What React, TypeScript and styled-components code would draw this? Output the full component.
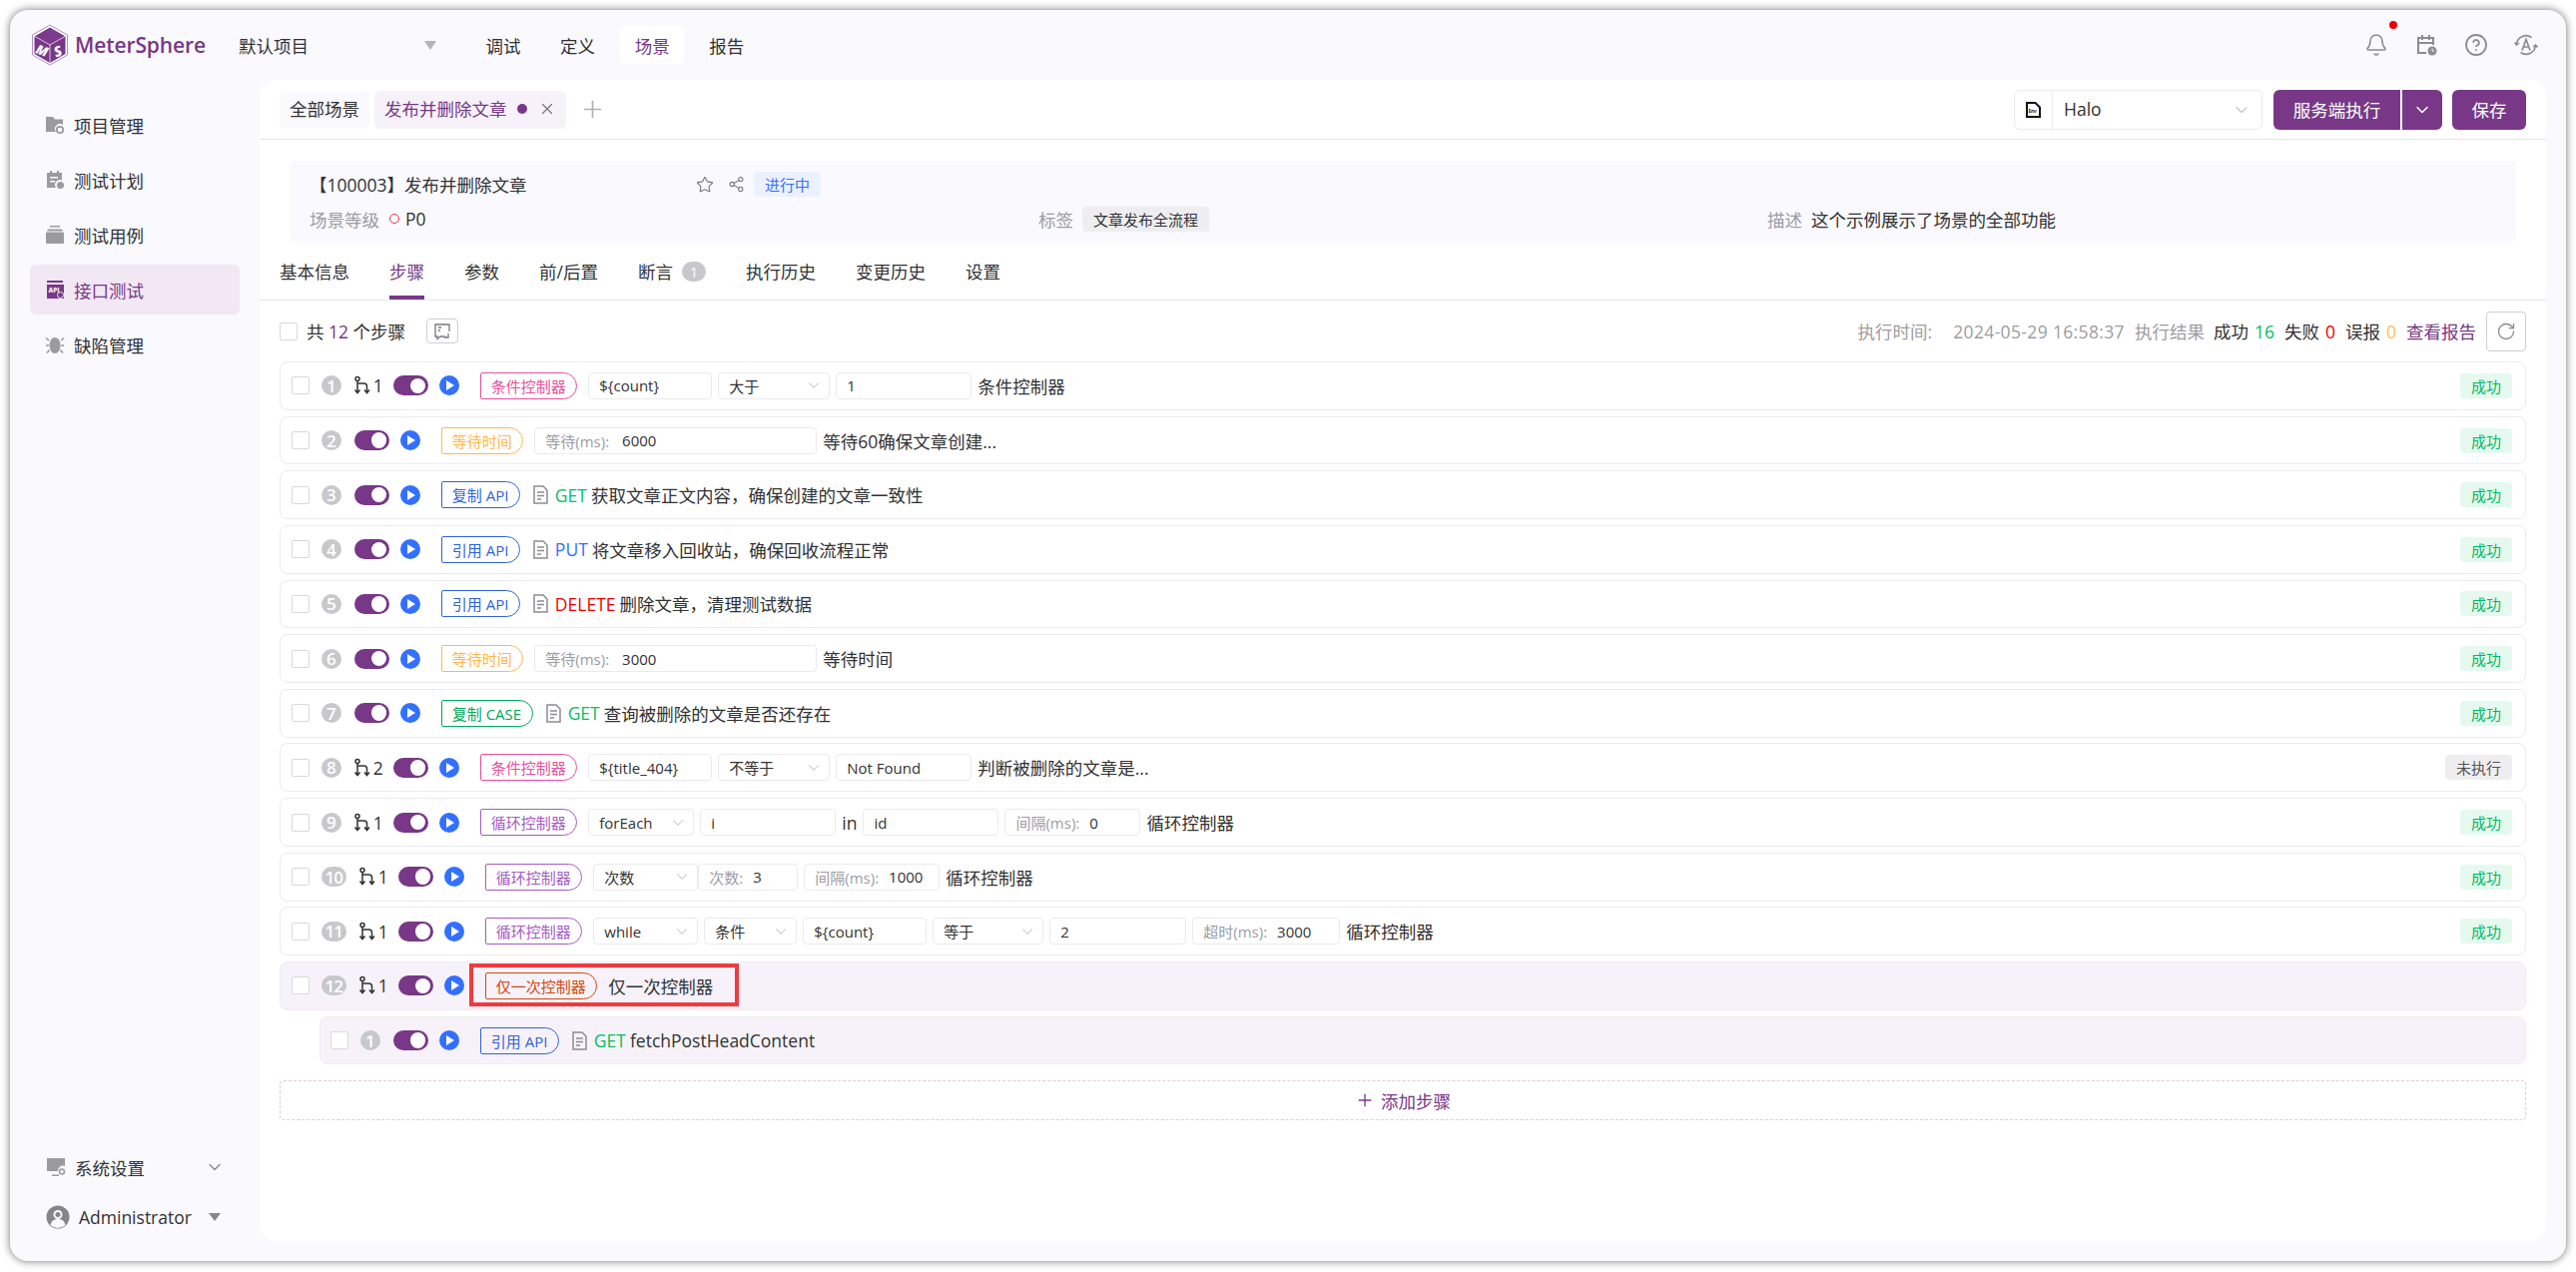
import { ReactNode } from 'react';
import styled, { createGlobalStyle } from 'styled-components';
import { Bell, ChevronDown, CircleHelp, Plus, RotateCw, Share2, Star, X } from 'lucide-react';

const COLORS = {
  primary: '#783887',
  primaryLight: '#f7f2f9',
  text: '#323233',
  muted: '#9c9ca3',
  icon: '#9a9a9f',
  border: '#ebebef',
  panel: '#f9f9fe',
  blue: '#3370ff',
  green: '#00c261',
  red: '#f00000',
  orange: '#ffc14e',
};

const TAG_TONES = {
  pink: '#e94ea0',
  amber: '#ffb84a',
  blue: '#2f62dc',
  green: '#00a85a',
  purple: '#a55bc5',
  rust: '#d4470f',
};

type Tone = keyof typeof TAG_TONES;
type Method = 'GET' | 'PUT' | 'DELETE';

type FieldSpec =
  | { kind: 'input'; w: number; text: string; attached?: boolean }
  | { kind: 'select'; w: number; text: string }
  | { kind: 'labeled'; w: number; label: string; text: string; attached?: boolean; gap?: number }
  | { kind: 'word'; text: string };

type StepData = {
  index: number;
  branch?: number;
  tag: string;
  tone: Tone;
  fields?: FieldSpec[];
  method?: Method;
  desc: string;
  status?: 'success' | 'pending';
  highlight?: boolean;
  active?: boolean;
};

const STEPS: StepData[] = [
  {
    index: 1, branch: 1, tag: '条件控制器', tone: 'pink', desc: '条件控制器', status: 'success',
    fields: [
      { kind: 'input', w: 124, text: '${count}' },
      { kind: 'select', w: 112, text: '大于' },
      { kind: 'input', w: 136, text: '1' },
    ],
  },
  {
    index: 2, tag: '等待时间', tone: 'amber', desc: '等待60确保文章创建...', status: 'success',
    fields: [{ kind: 'labeled', w: 283, label: '等待(ms):', text: '6000', gap: 13 }],
  },
  { index: 3, tag: '复制 API', tone: 'blue', method: 'GET', desc: '获取文章正文内容，确保创建的文章一致性', status: 'success' },
  { index: 4, tag: '引用 API', tone: 'blue', method: 'PUT', desc: '将文章移入回收站，确保回收流程正常', status: 'success' },
  { index: 5, tag: '引用 API', tone: 'blue', method: 'DELETE', desc: '删除文章，清理测试数据', status: 'success' },
  {
    index: 6, tag: '等待时间', tone: 'amber', desc: '等待时间', status: 'success',
    fields: [{ kind: 'labeled', w: 283, label: '等待(ms):', text: '3000', gap: 13 }],
  },
  { index: 7, tag: '复制 CASE', tone: 'green', method: 'GET', desc: '查询被删除的文章是否还存在', status: 'success' },
  {
    index: 8, branch: 2, tag: '条件控制器', tone: 'pink', desc: '判断被删除的文章是...', status: 'pending',
    fields: [
      { kind: 'input', w: 124, text: '${title_404}' },
      { kind: 'select', w: 112, text: '不等于' },
      { kind: 'input', w: 136, text: 'Not Found' },
    ],
  },
  {
    index: 9, branch: 1, tag: '循环控制器', tone: 'purple', desc: '循环控制器', status: 'success',
    fields: [
      { kind: 'select', w: 106, text: 'forEach' },
      { kind: 'input', w: 136, text: 'i' },
      { kind: 'word', text: 'in' },
      { kind: 'input', w: 136, text: 'id' },
      { kind: 'labeled', w: 136, label: '间隔(ms):', text: '0' },
    ],
  },
  {
    index: 10, branch: 1, tag: '循环控制器', tone: 'purple', desc: '循环控制器', status: 'success',
    fields: [
      { kind: 'select', w: 105, text: '次数' },
      { kind: 'labeled', w: 100, label: '次数:', text: '3', attached: true },
      { kind: 'labeled', w: 136, label: '间隔(ms):', text: '1000' },
    ],
  },
  {
    index: 11, branch: 1, tag: '循环控制器', tone: 'purple', desc: '循环控制器', status: 'success',
    fields: [
      { kind: 'select', w: 105, text: 'while' },
      { kind: 'select', w: 93, text: '条件' },
      { kind: 'input', w: 124, text: '${count}' },
      { kind: 'select', w: 111, text: '等于' },
      { kind: 'input', w: 137, text: '2' },
      { kind: 'labeled', w: 148, label: '超时(ms):', text: '3000' },
    ],
  },
  { index: 12, branch: 1, tag: '仅一次控制器', tone: 'rust', desc: '仅一次控制器', highlight: true, active: true },
];

const CHILD_STEP: StepData = { index: 1, tag: '引用 API', tone: 'blue', method: 'GET', desc: 'fetchPostHeadContent', active: true };

const GlobalStyle = createGlobalStyle`
  html, body {
    margin: 0;
    background: #fff;
  }
  body {
    font-family: "Open Sans", "Noto Sans CJK SC", sans-serif;
    font-size: 17.5px;
    color: ${COLORS.text};
  }
  * {
    box-sizing: border-box;
  }
`;

const Screen = styled.div`
  width: 2580px;
  height: 1274px;
  padding: 10px 10px 11px;
  overflow: hidden;
`;

const Window = styled.div`
  height: 100%;
  display: flex;
  flex-direction: column;
  background: ${COLORS.panel};
  border-radius: 18px;
  box-shadow: 0 0 9px rgba(0, 0, 0, 0.55);
`;

const Header = styled.header`
  height: 70px;
  flex: none;
  display: flex;
  align-items: center;
  padding: 0 28px 0 21px;
`;

const Brand = styled.div`
  display: flex;
  align-items: center;
  gap: 6px;
  width: 208px;
`;

const BrandName = styled.span`
  font-size: 21px;
  font-weight: 600;
  color: ${COLORS.primary};
  letter-spacing: -0.1px;
`;

const ProjectPicker = styled.div`
  width: 233px;
  display: flex;
  align-items: center;
  justify-content: space-between;
  padding-right: 35px;
`;

const Caret = styled.span`
  width: 0;
  height: 0;
  border-left: 6px solid transparent;
  border-right: 6px solid transparent;
  border-top: 9px solid #b4b4ba;
`;

const TopMenu = styled.nav`
  display: flex;
  gap: 10.6px;
`;

const TopMenuItem = styled.div<{ $active?: boolean }>`
  height: 38px;
  padding: 0 14.5px;
  display: flex;
  align-items: center;
  border-radius: 6px;
  background: ${p => (p.$active ? '#fff' : 'transparent')};
  color: ${p => (p.$active ? COLORS.primary : COLORS.text)};
`;

const HeaderIcons = styled.div`
  margin-left: auto;
  display: flex;
  gap: 26px;
  color: #8c8c92;
`;

const IconSlot = styled.div`
  position: relative;
  width: 24px;
  height: 24px;
`;

const RedDot = styled.span`
  position: absolute;
  top: -12px;
  right: -9px;
  width: 8px;
  height: 8px;
  border-radius: 50%;
  background: ${COLORS.red};
`;

const Body = styled.div`
  flex: 1;
  min-height: 0;
  display: flex;
`;

const Sidebar = styled.aside`
  width: 250px;
  flex: none;
  display: flex;
  flex-direction: column;
  gap: 5px;
  padding: 20px 20px 0;
`;

const SideItem = styled.div<{ $active?: boolean }>`
  height: 50px;
  display: flex;
  align-items: center;
  gap: 9px;
  padding-left: 15px;
  border-radius: 6px;
  background: ${p => (p.$active ? '#f1e8f4' : 'transparent')};
  color: ${p => (p.$active ? COLORS.primary : COLORS.text)};
`;

const SideFooter = styled.div`
  margin-top: auto;
  padding: 0 0 24px 16px;
  display: flex;
  flex-direction: column;
  gap: 10px;
`;

const FooterRow = styled.div`
  height: 40px;
  display: flex;
  align-items: center;
  gap: 9px;
  padding-right: 15px;
`;

const FooterEnd = styled.span`
  width: 20px;
  margin-left: auto;
  display: flex;
  justify-content: center;
  color: #85858b;
`;

const UserCaret = styled.span`
  width: 0;
  height: 0;
  border-left: 6px solid transparent;
  border-right: 6px solid transparent;
  border-top: 8px solid #85858b;
`;

const Main = styled.main`
  flex: 1;
  min-width: 0;
  margin: 0 20px 20px 0;
  background: #fff;
  border-radius: 16px;
`;

const TabBar = styled.div`
  height: 60px;
  display: flex;
  align-items: center;
  padding: 0 20px;
  border-bottom: 1.25px solid #e6e6ec;
`;

const SceneTab = styled.div<{ $active?: boolean }>`
  height: 38px;
  display: flex;
  align-items: center;
  padding: 0 10px 2px;
  margin-right: 5px;
  border-radius: 6px;
  background: ${p => (p.$active ? COLORS.primaryLight : COLORS.panel)};
  color: ${p => (p.$active ? COLORS.primary : COLORS.text)};
`;

const UnsavedDot = styled.span`
  width: 10px;
  height: 10px;
  margin: 0 11px 0 10px;
  border-radius: 50%;
  background: ${COLORS.primary};
`;

const AddTab = styled.span`
  display: flex;
  margin-left: 8px;
  color: #b0b0b6;
`;

const EnvPicker = styled.div`
  margin-left: auto;
  width: 249px;
  height: 40px;
  display: flex;
  align-items: center;
  border: 1.25px solid ${COLORS.border};
  border-radius: 6px;
`;

const EnvIcon = styled.span`
  width: 38px;
  height: 100%;
  display: flex;
  align-items: center;
  justify-content: center;
  border-right: 1.25px solid ${COLORS.border};
`;

const EnvName = styled.span`
  flex: 1;
  padding: 0 0 2px 11px;
`;

const EnvChevron = styled.span`
  display: flex;
  padding-right: 10px;
  color: #c4c4ca;
`;

const PrimaryButton = styled.button<{ $side?: 'left' | 'right'; $w: number }>`
  width: ${p => p.$w}px;
  height: 40px;
  display: flex;
  align-items: center;
  justify-content: center;
  padding: 0;
  border: 0;
  font: inherit;
  color: #fff;
  background: ${COLORS.primary};
  border-radius: ${p =>
    p.$side === 'left' ? '6px 0 0 6px' : p.$side === 'right' ? '0 6px 6px 0' : '6px'};
`;

const ButtonGroup = styled.div`
  display: flex;
  gap: 2px;
  margin: 0 10px 0 11px;
`;

const InfoPanel = styled.section`
  height: 82px;
  margin: 21px 30px 0;
  padding: 10px 20px 0;
  background: ${COLORS.panel};
  border-radius: 6px;
`;

const TitleRow = styled.div`
  height: 27px;
  display: flex;
  align-items: center;
`;

const Title = styled.div`
  width: 387px;
`;

const TitleIcon = styled.span`
  display: flex;
  margin-right: 14px;
  color: #77777d;
`;

const ProgressBadge = styled.span`
  width: 67px;
  height: 25px;
  margin-left: -5px;
  display: flex;
  align-items: center;
  justify-content: center;
  font-size: 15px;
  color: ${COLORS.blue};
  background: #ebf1ff;
  border-radius: 4px;
`;

const InfoGrid = styled.div`
  display: grid;
  grid-template-columns: repeat(3, 1fr);
  margin-top: 6px;
`;

const InfoCell = styled.div`
  height: 30px;
  display: flex;
  align-items: center;
`;

const InfoLabel = styled.span`
  color: ${COLORS.muted};
  margin-right: 9px;
`;

const PriorityRing = styled.span`
  width: 10px;
  height: 10px;
  margin: 0 6px 0 1px;
  border: 1.5px solid #f2323f;
  border-radius: 50%;
`;

const LabelChip = styled.span`
  height: 25px;
  padding: 0 11px;
  display: flex;
  align-items: center;
  font-size: 15px;
  background: #eeeef1;
  border-radius: 4px;
`;

const DetailTabs = styled.div`
  height: 58px;
  display: flex;
  gap: 40px;
  padding: 0 20px;
  border-bottom: 1.25px solid #e6e6ec;
`;

const DetailTab = styled.div<{ $active?: boolean }>`
  display: flex;
  align-items: center;
  padding-top: 4px;
  border-bottom: 4px solid ${p => (p.$active ? COLORS.primary : 'transparent')};
  color: ${p => (p.$active ? COLORS.primary : COLORS.text)};
`;

const CountPill = styled.span`
  width: 24px;
  height: 20px;
  margin-left: 9px;
  display: flex;
  align-items: center;
  justify-content: center;
  font-size: 15px;
  color: #fff;
  background: #c8c8cc;
  border-radius: 10px;
`;

const Toolbar = styled.div`
  height: 61px;
  display: flex;
  align-items: center;
  padding: 0 20px;
`;

const Checkbox = styled.span`
  width: 18px;
  height: 18px;
  flex: none;
  background: #fff;
  border: 1.25px solid #d9d9de;
  border-radius: 2px;
`;

const StepCount = styled.span`
  margin-left: 9px;
`;

const CountValue = styled.span`
  color: ${COLORS.primary};
`;

const ExpandButton = styled.span`
  width: 32px;
  height: 25px;
  margin-left: 21px;
  display: flex;
  align-items: center;
  justify-content: center;
  border: 1.25px solid #cfcfd4;
  border-radius: 4px;
  color: #77777d;
`;

const RunSummary = styled.div`
  margin-left: auto;
  display: flex;
  align-items: center;
  gap: 6px;
`;

const Muted = styled.span<{ $after?: number; $spread?: boolean }>`
  color: ${COLORS.muted};
  margin-right: ${p => p.$after ?? 0}px;
  letter-spacing: ${p => (p.$spread ? 0.35 : 0)}px;
`;

const Count = styled.span<{ $color: string }>`
  color: ${p => p.$color};
  margin-right: 4px;
`;

const ReportLink = styled.span`
  color: ${COLORS.primary};
`;

const RefreshButton = styled.span`
  width: 40px;
  height: 40px;
  margin-left: 4px;
  display: flex;
  align-items: center;
  justify-content: center;
  border: 1.25px solid #cfcfd4;
  border-radius: 4px;
  color: #8c8c92;
`;

const StepList = styled.div`
  display: flex;
  flex-direction: column;
  gap: 5.9px;
  padding: 0 20px;
`;

const Row = styled.div<{ $active?: boolean; $child?: boolean }>`
  height: 48.75px;
  display: flex;
  align-items: center;
  margin-left: ${p => (p.$child ? 40 : 0)}px;
  padding: 0 13px 0 ${p => (p.$child ? 9.75 : 10.75)}px;
  background: ${p => (p.$active ? COLORS.primaryLight : '#fff')};
  border: 1.25px solid ${p => (p.$active ? '#f0ebf2' : COLORS.border)};
  border-radius: 8px;
`;

const IndexBadge = styled.span<{ $wide?: boolean }>`
  width: ${p => (p.$wide ? 25 : 20)}px;
  height: 20px;
  flex: none;
  margin: 0 13px 0 12px;
  display: flex;
  align-items: center;
  justify-content: center;
  font-size: 17px;
  font-weight: 600;
  letter-spacing: ${p => (p.$wide ? -1 : 0)}px;
  color: #fff;
  background: #c8c8cc;
  border-radius: 10px;
`;

const BranchCount = styled.span`
  width: 40px;
  margin-left: -1px;
  display: flex;
  align-items: center;
  gap: 2px;
`;

const Toggle = styled.span`
  width: 35px;
  height: 20px;
  flex: none;
  margin-right: 11px;
  display: flex;
  align-items: center;
  justify-content: flex-end;
  padding-right: 2.5px;
  background: ${COLORS.primary};
  border-radius: 10px;

  &::after {
    content: '';
    width: 15.5px;
    height: 15.5px;
    background: #fff;
    border-radius: 50%;
  }
`;

const PlayButton = styled.span`
  width: 20px;
  height: 20px;
  flex: none;
  margin-right: 21px;
  display: flex;
  align-items: center;
  justify-content: center;
  padding-left: 2px;
  background: ${COLORS.blue};
  border-radius: 50%;

  &::after {
    content: '';
    border-left: 8px solid #fff;
    border-top: 5px solid transparent;
    border-bottom: 5px solid transparent;
  }
`;

const StepTag = styled.span<{ $tone: Tone }>`
  height: 27px;
  flex: none;
  margin-right: 11px;
  padding: 0 10.5px 0 10px;
  display: flex;
  align-items: center;
  font-size: 15px;
  white-space: nowrap;
  color: ${p => TAG_TONES[p.$tone]};
  border: 1.25px solid ${p => TAG_TONES[p.$tone]};
  border-radius: 2px 14px 14px 2px;
`;

const Fields = styled.div`
  display: flex;
  align-items: center;
  gap: 6px;
`;

const FieldBox = styled.div<{ $w: number; $attached?: boolean; $gap?: number }>`
  width: ${p => p.$w}px;
  height: 27px;
  flex: none;
  margin-left: ${p => (p.$attached ? -6 : 0)}px;
  padding: 0 6px 0 10px;
  display: flex;
  align-items: center;
  gap: ${p => p.$gap ?? 10}px;
  font-size: 15px;
  background: #fff;
  border: 1.25px solid ${COLORS.border};
  border-radius: 4px;
`;

const SelectChevron = styled.span`
  margin-left: auto;
  display: flex;
  color: #c4c4ca;
`;

const FieldLabel = styled.span`
  color: ${COLORS.muted};
`;

const StepDesc = styled.span<{ $afterFields?: boolean }>`
  margin-left: ${p => (p.$afterFields ? 6 : 0)}px;
  white-space: nowrap;
`;

const DocIcon = styled.span`
  display: flex;
  flex: none;
  margin: 0 7px 0 2px;
`;

const MethodName = styled.span<{ $method: Method }>`
  margin-right: 4px;
  color: ${p =>
    p.$method === 'GET' ? COLORS.green : p.$method === 'PUT' ? COLORS.blue : COLORS.red};
`;

const StatusChip = styled.span<{ $status: 'success' | 'pending' }>`
  margin-left: auto;
  height: 25px;
  padding: 0 11px;
  display: flex;
  align-items: center;
  font-size: 15px;
  color: ${p => (p.$status === 'success' ? '#00b969' : '#55555a')};
  background: ${p => (p.$status === 'success' ? '#e5f9ef' : '#eeeef1')};
  border-radius: 4px;
`;

const Highlight = styled.div`
  position: relative;
  display: flex;
  align-items: center;

  &::after {
    content: '';
    position: absolute;
    inset: -9px -26px -7px -16px;
    border: 4.5px solid #ef3a3e;
    pointer-events: none;
  }
`;

const AddStep = styled.div`
  height: 40px;
  margin: 16px 20px 0;
  display: flex;
  align-items: center;
  justify-content: center;
  gap: 6px;
  color: ${COLORS.primary};
  border: 1.25px dashed #e2c6ec;
  border-radius: 4px;
`;

const Logo = () => (
  <svg width="38" height="42" viewBox="0 0 38 42">
    <path d="M19 1 36.5 11v20L19 41 1.5 31V11z" fill="#fff" stroke="#b68cc3" strokeWidth="1" />
    <path d="M19 3.5 34.5 12.5v17.5L19 39 3.5 30V12.5z" fill={COLORS.primary} />
    <path d="M19 4.5 33.5 12.5 19 20.5 4.5 12.5z" fill="#7c3a8c" />
    <path d="M19 21v18M4 12.5l15 8.5 15-8.5" stroke="#d9c3e0" strokeWidth="1" fill="none" />
    <text x="5" y="31" fontSize="13" fontWeight="800" fontStyle="italic" fill="#fff" fontFamily="Open Sans" transform="rotate(20 10 27)">M</text>
    <text x="23" y="32" fontSize="14" fontWeight="800" fontStyle="italic" fill="#fff" fontFamily="Open Sans" transform="rotate(-22 28 27)">S</text>
  </svg>
);

const SideGlyph = ({ children }: { children: ReactNode }) => (
  <svg width="20" height="20" viewBox="0 0 20 20" style={{ flex: 'none' }} fill="currentColor">
    {children}
  </svg>
);

const FolderGlyph = () => (
  <SideGlyph>
    <path d="M1 2h7l2 2.5h8V10a5 5 0 0 0-7 7H1z" />
    <circle cx="15" cy="15" r="3.2" fill="none" stroke="currentColor" strokeWidth="1.8" />
  </SideGlyph>
);

const PlanGlyph = () => (
  <SideGlyph>
    <path d="M5 1h2v2h5V1h2v2h3v7.5a5 5 0 0 0-6 7.5H2V3h3z" />
    <rect x="5" y="7" width="8" height="1.5" fill="#f9f9fe" />
    <rect x="5" y="11" width="5" height="1.5" fill="#f9f9fe" />
    <circle cx="15.5" cy="15.5" r="3.5" />
  </SideGlyph>
);

const CaseGlyph = () => (
  <SideGlyph>
    <rect x="5" y="1" width="10" height="1.5" />
    <path d="M3 4.5h14l1 2H2z" />
    <rect x="1" y="7.5" width="18" height="11.5" rx="1" />
  </SideGlyph>
);

const ApiGlyph = () => (
  <SideGlyph>
    <rect x="2" y="1" width="16" height="2" />
    <rect x="2" y="5" width="17" height="14" />
    <text x="3.5" y="13" fontSize="6.5" fontWeight="800" fill="#f1e8f4" fontFamily="Open Sans">API</text>
    <circle cx="15.5" cy="15.5" r="3" fill="none" stroke="#f1e8f4" strokeWidth="1" />
  </SideGlyph>
);

const BugGlyph = () => (
  <SideGlyph>
    <ellipse cx="10" cy="11" rx="5.5" ry="8" />
    <path d="M4 6 1 3.5M16 6l3-2.5M4 11H1M16 11h3M4.5 15.5 2 18.5M15.5 15.5l2.5 3" stroke="currentColor" strokeWidth="1.6" fill="none" />
  </SideGlyph>
);

const SettingsGlyph = () => (
  <SideGlyph>
    <path d="M1 1h18v8a5 5 0 0 0-7 5H1z" />
    <rect x="6" y="17.5" width="7" height="1.5" />
    <circle cx="16" cy="14.5" r="2.5" fill="none" stroke="currentColor" strokeWidth="1.5" />
  </SideGlyph>
);

const CalendarIcon = () => (
  <svg width="24" height="24" viewBox="0 0 24 24" fill="none" stroke="currentColor" strokeWidth="2">
    <path d="M12 20H4V5h15v7M4 10h15M8 2v5M15 2v5" />
    <circle cx="18" cy="18" r="4.5" fill="currentColor" stroke="none" />
    <path d="M18 15.5V18h2" stroke="#f9f9fe" strokeWidth="1" />
  </svg>
);

const LanguageIcon = () => (
  <svg width="24" height="24" viewBox="0 0 24 24" fill="none" stroke="currentColor" strokeWidth="1.6">
    <path d="M2.5 12a9.5 9.5 0 0 1 15-7.5M21.5 12a9.5 9.5 0 0 1-15 7.5" />
    <path d="M.5 9.5l2 2.5L5 10M23.5 14.5l-2-2.5L19 14" />
    <path d="M8 17.5 12 6.5l4 11M9.3 14h5.4" strokeWidth="1.7" />
  </svg>
);

const EnvFileIcon = () => (
  <svg width="15" height="16" viewBox="0 0 15 16">
    <path d="M1 1h8.5L14 5.5V15H1z" fill="#fff" stroke="#111" strokeWidth="2" />
    <text x="2.5" y="10.5" fontSize="4.6" fontWeight="700" fill="#111" fontFamily="Open Sans">Env</text>
  </svg>
);

const AvatarIcon = () => (
  <svg width="24" height="24" viewBox="0 0 24 24">
    <circle cx="12" cy="12" r="11.5" fill="#85858b" />
    <circle cx="12" cy="9.5" r="4.5" fill="#f9f9fe" />
    <circle cx="12" cy="9.5" r="2.5" fill="#85858b" />
    <path d="M4.5 20c1-4.5 4-6 7.5-6s6.5 1.5 7.5 6a11 11 0 0 1-15 0z" fill="#f9f9fe" />
  </svg>
);

const ExpandIcon = () => (
  <svg width="18" height="18" viewBox="0 0 18 18" fill="none" stroke="currentColor" strokeWidth="1.3">
    <path d="M12 14H7l-3 2.5V14H2V2h14v7" />
    <path d="M5 5h3M5 8h2M15 11v4h-4" />
  </svg>
);

const BranchIcon = () => (
  <svg width="18" height="20" viewBox="0 0 18 20" fill="none" stroke="#323233" strokeWidth="1.5">
    <circle cx="4" cy="3.5" r="2" />
    <path d="M4 5.5V17M1.5 14.5 4 17.5l2.5-3" />
    <path d="M4 8h6.5a3 3 0 0 1 3 3v6M11 14.5l2.5 3 2.5-3" />
  </svg>
);

const DocumentIcon = () => (
  <svg width="15" height="19" viewBox="0 0 15 19" fill="none" stroke="#8c8c92" strokeWidth="1.5">
    <path d="M1 1h9l4 4v13H1z" />
    <path d="M4 7h7M4 10.5h7M4 14h4" />
  </svg>
);

const Field = ({ spec }: { spec: FieldSpec }) => {
  switch (spec.kind) {
    case 'word':
      return <span>{spec.text}</span>;
    case 'select':
      return (
        <FieldBox $w={spec.w}>
          {spec.text}
          <SelectChevron><ChevronDown size={18} strokeWidth={1.4} /></SelectChevron>
        </FieldBox>
      );
    case 'labeled':
      return (
        <FieldBox $w={spec.w} $attached={spec.attached} $gap={spec.gap}>
          <FieldLabel>{spec.label}</FieldLabel>
          {spec.text}
        </FieldBox>
      );
    default:
      return <FieldBox $w={spec.w} $attached={spec.attached}>{spec.text}</FieldBox>;
  }
};

const StepRow = ({ step, child }: { step: StepData; child?: boolean }) => {
  const label = (
    <>
      <StepTag $tone={step.tone}>{step.tag}</StepTag>
      {step.method && (
        <>
          <DocIcon><DocumentIcon /></DocIcon>
          <MethodName $method={step.method}>{step.method}</MethodName>
        </>
      )}
      {step.fields && (
        <Fields>
          {step.fields.map((spec, i) => <Field spec={spec} key={i} />)}
        </Fields>
      )}
      <StepDesc $afterFields={!!step.fields}>{step.desc}</StepDesc>
    </>
  );

  return (
    <Row $active={step.active} $child={child}>
      <Checkbox />
      <IndexBadge $wide={step.index > 9}>{step.index}</IndexBadge>
      {step.branch && (
        <BranchCount>
          <BranchIcon />
          {step.branch}
        </BranchCount>
      )}
      <Toggle />
      <PlayButton />
      {step.highlight ? <Highlight>{label}</Highlight> : label}
      {step.status && (
        <StatusChip $status={step.status}>
          {step.status === 'success' ? '成功' : '未执行'}
        </StatusChip>
      )}
    </Row>
  );
};

const SIDE_ITEMS = [
  { name: '项目管理', icon: <FolderGlyph /> },
  { name: '测试计划', icon: <PlanGlyph /> },
  { name: '测试用例', icon: <CaseGlyph /> },
  { name: '接口测试', icon: <ApiGlyph />, active: true },
  { name: '缺陷管理', icon: <BugGlyph /> },
];

const SideIcon = styled.span<{ $active?: boolean }>`
  display: flex;
  color: ${p => (p.$active ? COLORS.primary : COLORS.icon)};
`;

const DETAIL_TABS = ['基本信息', '步骤', '参数', '前/后置', '断言', '执行历史', '变更历史', '设置'];

const App = () => (
  <Screen>
    <GlobalStyle />
    <Window>
      <Header>
        <Brand>
          <Logo />
          <BrandName>MeterSphere</BrandName>
        </Brand>
        <ProjectPicker>
          默认项目
          <Caret />
        </ProjectPicker>
        <TopMenu>
          <TopMenuItem>调试</TopMenuItem>
          <TopMenuItem>定义</TopMenuItem>
          <TopMenuItem $active>场景</TopMenuItem>
          <TopMenuItem>报告</TopMenuItem>
        </TopMenu>
        <HeaderIcons>
          <IconSlot>
            <Bell size={24} strokeWidth={1.6} />
            <RedDot />
          </IconSlot>
          <IconSlot><CalendarIcon /></IconSlot>
          <IconSlot><CircleHelp size={24} strokeWidth={1.8} /></IconSlot>
          <IconSlot><LanguageIcon /></IconSlot>
        </HeaderIcons>
      </Header>
      <Body>
        <Sidebar>
          {SIDE_ITEMS.map(item => (
            <SideItem $active={item.active} key={item.name}>
              <SideIcon $active={item.active}>{item.icon}</SideIcon>
              {item.name}
            </SideItem>
          ))}
          <SideFooter>
            <FooterRow>
              <SideIcon><SettingsGlyph /></SideIcon>
              系统设置
              <FooterEnd><ChevronDown size={20} strokeWidth={1.5} /></FooterEnd>
            </FooterRow>
            <FooterRow>
              <AvatarIcon />
              Administrator
              <FooterEnd><UserCaret /></FooterEnd>
            </FooterRow>
          </SideFooter>
        </Sidebar>
        <Main>
          <TabBar>
            <SceneTab>全部场景</SceneTab>
            <SceneTab $active>
              发布并删除文章
              <UnsavedDot />
              <X size={18} color="#77777d" strokeWidth={1.6} />
            </SceneTab>
            <AddTab><Plus size={27} strokeWidth={1.5} /></AddTab>
            <EnvPicker>
              <EnvIcon><EnvFileIcon /></EnvIcon>
              <EnvName>Halo</EnvName>
              <EnvChevron><ChevronDown size={20} strokeWidth={1.4} /></EnvChevron>
            </EnvPicker>
            <ButtonGroup>
              <PrimaryButton $side="left" $w={127}>服务端执行</PrimaryButton>
              <PrimaryButton $side="right" $w={40}><ChevronDown size={20} strokeWidth={1.8} /></PrimaryButton>
            </ButtonGroup>
            <PrimaryButton $w={74}>保存</PrimaryButton>
          </TabBar>

          <InfoPanel>
            <TitleRow>
              <Title>【100003】发布并删除文章</Title>
              <TitleIcon><Star size={18} strokeWidth={1.5} /></TitleIcon>
              <TitleIcon><Share2 size={17} strokeWidth={1.5} /></TitleIcon>
              <ProgressBadge>进行中</ProgressBadge>
            </TitleRow>
            <InfoGrid>
              <InfoCell>
                <InfoLabel>场景等级</InfoLabel>
                <PriorityRing />
                P0
              </InfoCell>
              <InfoCell>
                <InfoLabel>标签</InfoLabel>
                <LabelChip>文章发布全流程</LabelChip>
              </InfoCell>
              <InfoCell>
                <InfoLabel>描述</InfoLabel>
                这个示例展示了场景的全部功能
              </InfoCell>
            </InfoGrid>
          </InfoPanel>

          <DetailTabs>
            {DETAIL_TABS.map(tab => (
              <DetailTab $active={tab === '步骤'} key={tab}>
                {tab}
                {tab === '断言' && <CountPill>1</CountPill>}
              </DetailTab>
            ))}
          </DetailTabs>

          <Toolbar>
            <Checkbox />
            <StepCount>共 <CountValue>12</CountValue> 个步骤</StepCount>
            <ExpandButton><ExpandIcon /></ExpandButton>
            <RunSummary>
              <Muted $after={15}>执行时间:</Muted>
              <Muted $after={4} $spread>2024-05-29 16:58:37</Muted>
              <Muted $after={3}>执行结果</Muted>
              <span>成功</span>
              <Count $color={COLORS.green}>16</Count>
              <span>失败</span>
              <Count $color={COLORS.red}>0</Count>
              <span>误报</span>
              <Count $color={COLORS.orange}>0</Count>
              <ReportLink>查看报告</ReportLink>
              <RefreshButton><RotateCw size={20} strokeWidth={1.6} /></RefreshButton>
            </RunSummary>
          </Toolbar>

          <StepList>
            {STEPS.map(step => <StepRow step={step} key={step.index} />)}
            <StepRow step={CHILD_STEP} child />
          </StepList>

          <AddStep>
            <Plus size={20} strokeWidth={1.6} />
            添加步骤
          </AddStep>
        </Main>
      </Body>
    </Window>
  </Screen>
);

export default App;
